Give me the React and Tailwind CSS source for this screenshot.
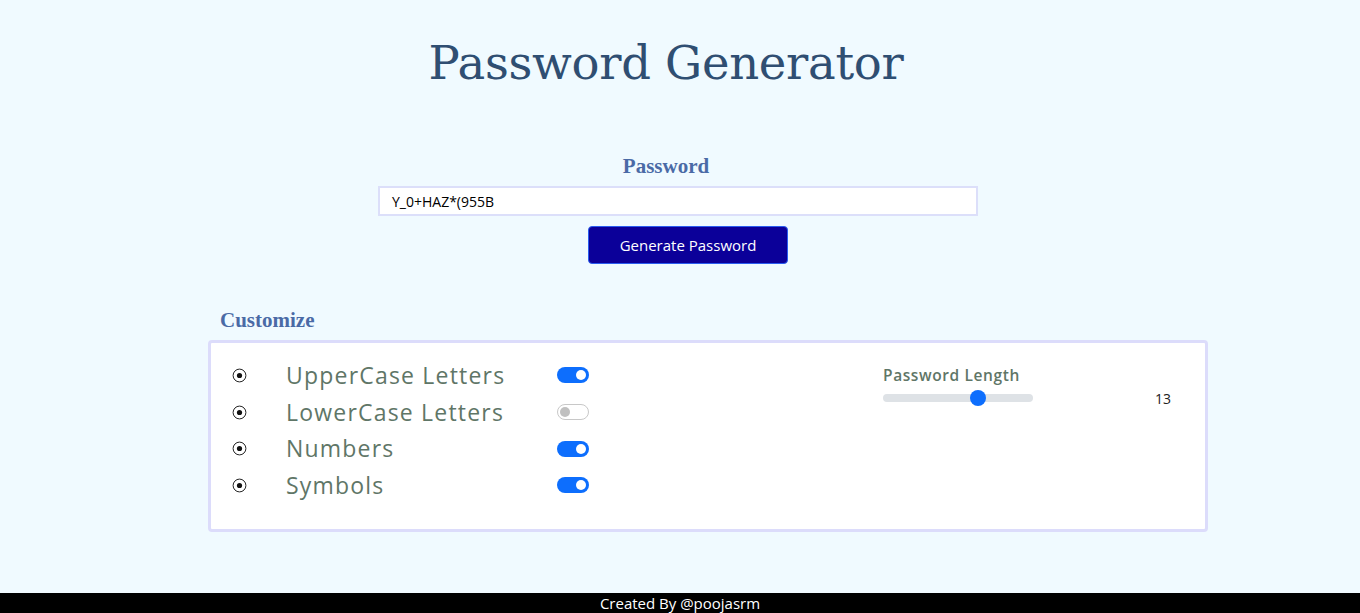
import React from "react";

function Radio() {
  return (
    <svg width="15" height="15" viewBox="0 0 15 15" className="shrink-0">
      <circle cx="7.5" cy="7.5" r="6.4" fill="none" stroke="#222" strokeWidth="1" />
      <circle cx="7.5" cy="7.5" r="2.6" fill="#111" />
    </svg>
  );
}

function Toggle({ on }) {
  return on ? (
    <div className="w-[32px] h-[16px] rounded-full bg-[#0d6efd] flex items-center justify-end pr-[3px]">
      <div className="w-[10px] h-[10px] rounded-full bg-white" />
    </div>
  ) : (
    <div className="w-[32px] h-[16px] rounded-full bg-white border border-[#c8c8c8] flex items-center justify-start pl-[2px]">
      <div className="w-[10px] h-[10px] rounded-full bg-[#c0c0c0]" />
    </div>
  );
}

const options = [
  { label: "UpperCase Letters", on: true },
  { label: "LowerCase Letters", on: false },
  { label: "Numbers", on: true },
  { label: "Symbols", on: true },
];

export default function App() {
  return (
    <div className="h-[613px] w-full bg-[#f0faff] flex flex-col overflow-hidden">
      <div className="flex-1 flex flex-col">
        <h1
          className="pt-[33px] h-[93px] text-[46.5px] leading-[60px] text-[#2f4e72] text-center ml-[-28px]"
          style={{ fontFamily: '"DejaVu Serif", serif', fontWeight: 300, letterSpacing: "-0.3px" }}
        >
          Password Generator
        </h1>
        <div
          className="mt-[61px] h-[24px] text-[21px] leading-[24px] font-bold text-[#4a6aa6] text-center ml-[-28px]"
          style={{ fontFamily: '"Liberation Serif", serif' }}
        >
          Password
        </div>
        <div className="mt-[8px] ml-[378px] w-[600px] h-[30px] border-2 border-[#dcdffa] bg-white flex items-center pl-[12px]">
          <span
            className="text-[14px] text-black"
            style={{ fontFamily: '"Open Sans", sans-serif' }}
          >
            Y_0+HAZ*(955B
          </span>
        </div>
        <button
          className="mt-[10px] ml-[588px] w-[200px] h-[38px] bg-[#0b0099] border border-[#2a5cf0] rounded-[4px] text-white text-[15px]"
          style={{ fontFamily: '"Open Sans", sans-serif' }}
        >
          Generate Password
        </button>
        <div
          className="mt-[44px] ml-[220px] h-[24px] text-[21px] leading-[24px] font-bold text-[#4a6aa6]"
          style={{ fontFamily: '"Liberation Serif", serif' }}
        >
          Customize
        </div>
        <div className="mt-[8px] ml-[208px] w-[1000px] h-[192px] bg-white border-[3px] border-[#dcdcfb] rounded-[4px] flex pt-[14px]">
          <div className="flex flex-col">
            {options.map((o) => (
              <div key={o.label} className="h-[36.7px] flex items-center">
                <div className="w-[75px] pl-[21px] flex items-center">
                  <Radio />
                </div>
                <div
                  className="w-[271px] text-[23px] text-[#5f7667]"
                  style={{ fontFamily: '"Open Sans", sans-serif', letterSpacing: "1.2px" }}
                >
                  {o.label}
                </div>
                <Toggle on={o.on} />
              </div>
            ))}
          </div>
          <div className="ml-[294px] flex flex-col pt-[8px]">
            <div
              className="text-[15.5px] leading-[20px] font-semibold text-[#5f7667]"
              style={{ fontFamily: '"Open Sans", sans-serif', letterSpacing: "0.6px" }}
            >
              Password Length
            </div>
            <div className="flex items-center mt-[4px] h-[18px]">
              <div className="relative w-[150px] h-[8px] rounded-full bg-[#dee2e6]">
                <div className="absolute top-[-4px] left-[87px] w-[16px] h-[16px] rounded-full bg-[#0d6efd]" />
              </div>
              <span
                className="ml-[122px] text-[14px] text-[#222]"
                style={{ fontFamily: '"Open Sans", sans-serif' }}
              >
                13
              </span>
            </div>
          </div>
        </div>
      </div>
      <footer
        className="h-[20px] bg-black text-white text-center text-[15px] leading-[20px]"
        style={{ fontFamily: '"Open Sans", sans-serif' }}
      >
        Created By @poojasrm
      </footer>
    </div>
  );
}
